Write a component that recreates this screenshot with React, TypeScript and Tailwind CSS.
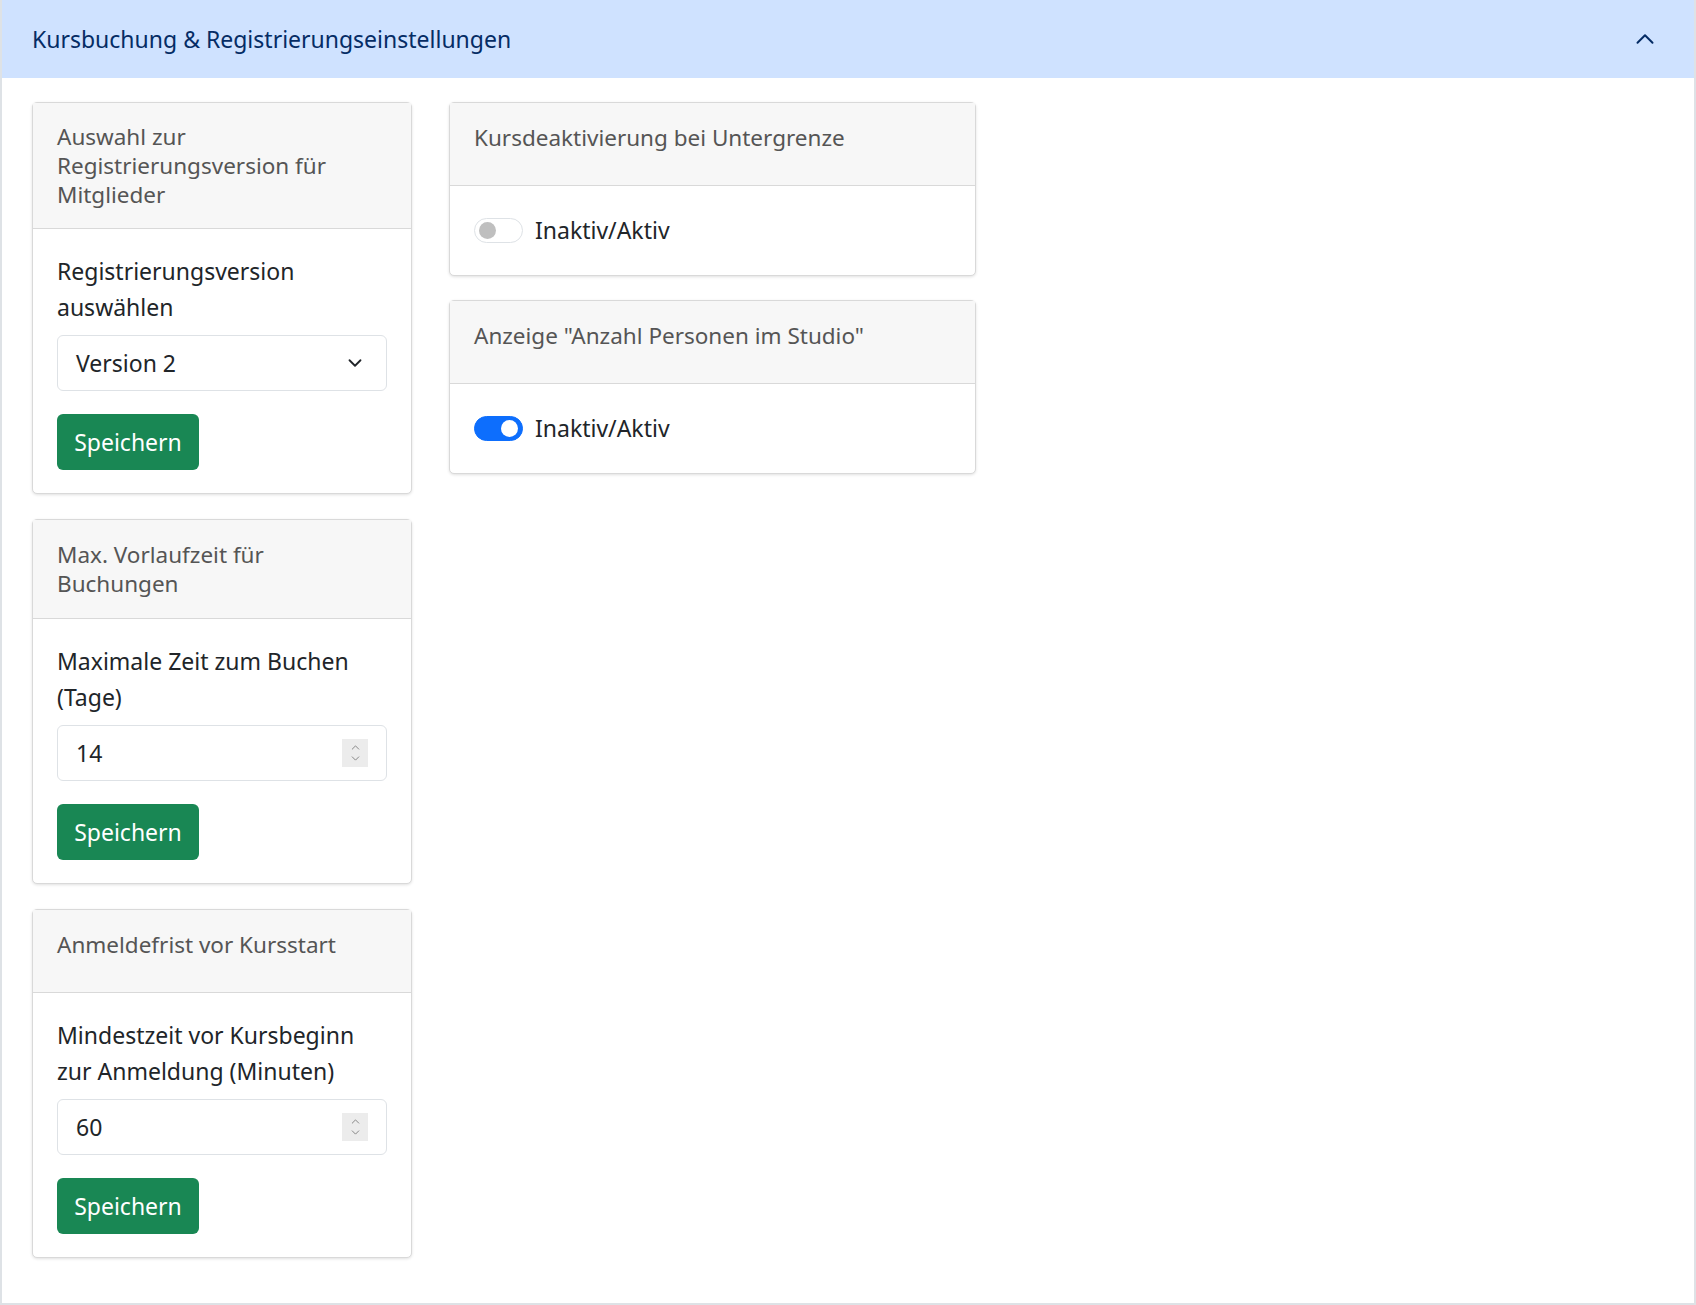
import { ChevronDown, ChevronUp } from "lucide-react";

function Card({ title, children, headerLines = false }: { title: string; children: React.ReactNode; headerLines?: boolean }) {
  return (
    <div className="border border-[#d9d9d9] rounded-[5px] bg-white shadow-[0_1px_3px_rgba(0,0,0,0.12)]">
      <div className={`bg-[#f7f7f7] border-b border-[#d9d9d9] px-[24px] ${headerLines ? "py-[19px]" : "py-[20px] min-h-[83px]"} text-[22.5px] leading-[29px] text-[#555]`}>
        {title}
      </div>
      {children}
    </div>
  );
}

function Btn() {
  return (
    <button className="mt-[23px] h-[56px] w-[142px] rounded-[6px] bg-[#198754] text-white text-[23px]">Speichern</button>
  );
}

function NumberField({ label, value }: { label: string; value: string }) {
  return (
    <div className="px-[24px] pt-[24px] pb-[23px]">
      <div className="text-[23px] leading-[36px] text-[#212529]">{label}</div>
      <div className="mt-[10px] h-[56px] border border-[#dee2e6] rounded-[6px] flex items-center pl-[18px] pr-[18px] text-[23px] text-[#212529]">
        <span className="flex-1">{value}</span>
        <div className="w-[26px] h-[28px] bg-[#ececec] flex flex-col items-center justify-center text-[#777]">
          <ChevronUp size={13} strokeWidth={1.6} />
          <ChevronDown size={13} strokeWidth={1.6} className="-mt-[2px]" />
        </div>
      </div>
      <Btn />
    </div>
  );
}

function Toggle({ on }: { on: boolean }) {
  return (
    <div className="px-[24px] h-[89px] flex items-center gap-[12px]">
      <div className={`w-[49px] h-[25px] rounded-full border flex items-center px-[4px] ${on ? "bg-[#0d6efd] border-[#0d6efd] justify-end" : "bg-white border-[#dee2e6] justify-start"}`}>
        <div className={`w-[17px] h-[17px] rounded-full ${on ? "bg-white" : "bg-[#bfbfbf]"}`} />
      </div>
      <span className="text-[23px] text-[#212529]">Inaktiv/Aktiv</span>
    </div>
  );
}

export default function App() {
  return (
    <div className="w-[1696px] h-[1305px] bg-white" style={{ fontFamily: '"Noto Sans", "Open Sans", sans-serif' }}>
      <div className="h-full border-x-2 border-b-2 border-[#dee2e6] flex flex-col">
        <div className="h-[78px] bg-[#cfe2ff] flex items-center pl-[30px] pr-[34px]">
          <span className="flex-1 text-[23px] text-[#052c65]">Kursbuchung &amp; Registrierungseinstellungen</span>
          <ChevronUp size={30} strokeWidth={1.6} className="text-[#052c65]" />
        </div>
        <div className="flex items-start gap-[37px] pl-[30px] pt-[24px]">
          <div className="w-[380px] flex flex-col gap-[25px]">
            <Card title="Auswahl zur Registrierungsversion für Mitglieder" headerLines>
              <div className="px-[24px] pt-[24px] pb-[23px]">
                <div className="text-[23px] leading-[36px] text-[#212529]">Registrierungsversion auswählen</div>
                <div className="mt-[10px] h-[56px] border border-[#dee2e6] rounded-[6px] flex items-center pl-[18px] pr-[20px] text-[23px] text-[#212529]">
                  <span className="flex-1">Version 2</span>
                  <ChevronDown size={22} strokeWidth={2} />
                </div>
                <Btn />
              </div>
            </Card>
            <Card title="Max. Vorlaufzeit für Buchungen">
              <NumberField label="Maximale Zeit zum Buchen (Tage)" value="14" />
            </Card>
            <Card title="Anmeldefrist vor Kursstart">
              <NumberField label="Mindestzeit vor Kursbeginn zur Anmeldung (Minuten)" value="60" />
            </Card>
          </div>
          <div className="w-[527px] flex flex-col gap-[24px]">
            <Card title="Kursdeaktivierung bei Untergrenze">
              <Toggle on={false} />
            </Card>
            <Card title={'Anzeige "Anzahl Personen im Studio"'}>
              <Toggle on />
            </Card>
          </div>
        </div>
      </div>
    </div>
  );
}
